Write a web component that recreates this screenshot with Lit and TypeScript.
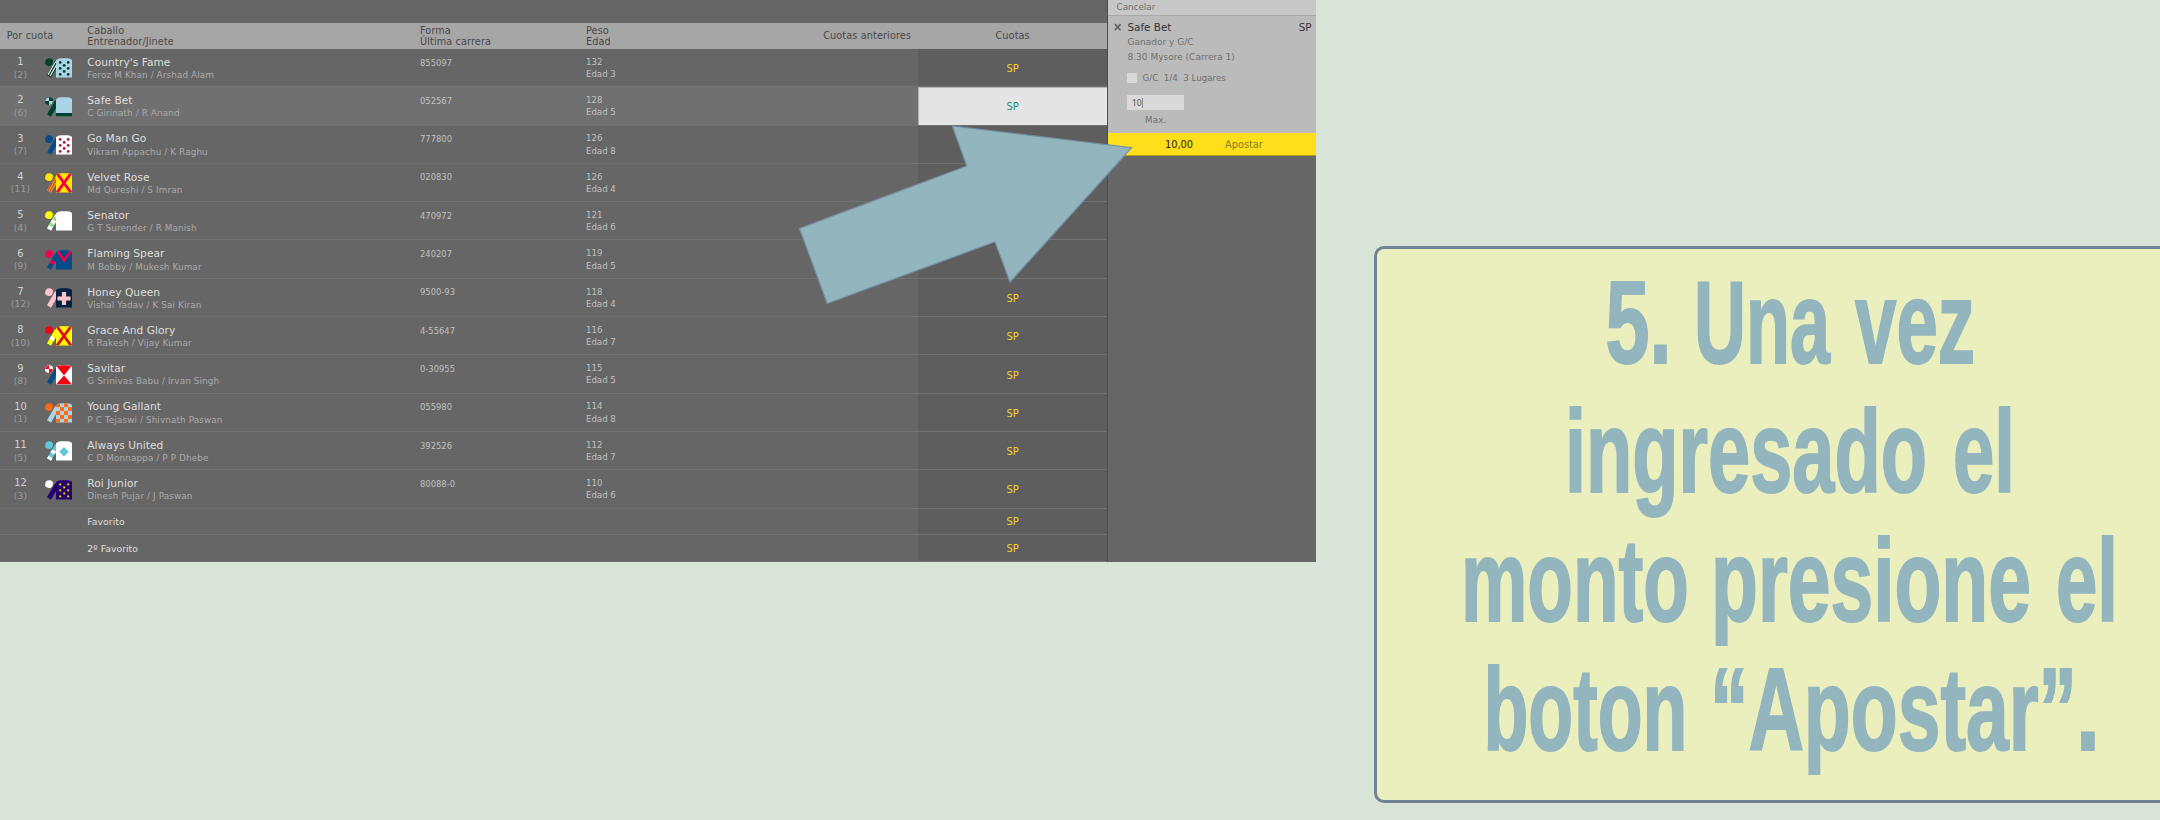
import { LitElement, html, css, svg, nothing, type SVGTemplateResult } from "lit";
import { customElement, property } from "lit/decorators.js";
import { classMap } from "lit/directives/class-map.js";

interface Runner {
  n: number;
  draw: number;
  name: string;
  team: string;
  form: string;
  weight: number;
  age: number;
}

const RUNNERS: Runner[] = [
  { n: 1, draw: 2, name: "Country's Fame", team: "Feroz M Khan / Arshad Alam", form: "855097", weight: 132, age: 3 },
  { n: 2, draw: 6, name: "Safe Bet", team: "C Girinath / R Anand", form: "052567", weight: 128, age: 5 },
  { n: 3, draw: 7, name: "Go Man Go", team: "Vikram Appachu / K Raghu", form: "777800", weight: 126, age: 8 },
  { n: 4, draw: 11, name: "Velvet Rose", team: "Md Qureshi / S Imran", form: "020830", weight: 126, age: 4 },
  { n: 5, draw: 4, name: "Senator", team: "G T Surender / R Manish", form: "470972", weight: 121, age: 6 },
  { n: 6, draw: 9, name: "Flaming Spear", team: "M Bobby / Mukesh Kumar", form: "240207", weight: 119, age: 5 },
  { n: 7, draw: 12, name: "Honey Queen", team: "Vishal Yadav / K Sai Kiran", form: "9500-93", weight: 118, age: 4 },
  { n: 8, draw: 10, name: "Grace And Glory", team: "R Rakesh / Vijay Kumar", form: "4-55647", weight: 116, age: 7 },
  { n: 9, draw: 8, name: "Savitar", team: "G Srinivas Babu / Irvan Singh", form: "0-30955", weight: 115, age: 5 },
  { n: 10, draw: 1, name: "Young Gallant", team: "P C Tejaswi / Shivnath Paswan", form: "055980", weight: 114, age: 8 },
  { n: 11, draw: 5, name: "Always United", team: "C D Monnappa / P P Dhebe", form: "392526", weight: 112, age: 7 },
  { n: 12, draw: 3, name: "Roi Junior", team: "Dinesh Pujar / J Paswan", form: "80088-0", weight: 110, age: 6 },
];

const BODY = "M11 2.2 Q13 .3 16 .2 H22.5 Q25.5 .4 27 2 V19.5 H11 Z";
const SLEEVE = "M11 3.2 L10 3.4 L2 17.3 L6 19.8 L11 11 Z";
const CAP = "M.3 4.6 A3.7 3.7 0 0 1 4 .3 Q7 0 8 2.6 Q8.2 6 6.2 7.4 Q4 8.6 2 7.6 L0 6 Z";

const dots = (color: string, r = 1.4): SVGTemplateResult[] =>
  [[15, 4], [23, 4], [19, 7], [15, 10], [23, 10], [19, 13], [15, 16], [23, 16]].map(
    ([x, y]) => svg`<circle cx=${x + 0.2} cy=${y + 0.4} r=${r} fill=${color} />`,
  );

const checks = (): SVGTemplateResult[] => {
  const out: SVGTemplateResult[] = [];
  for (let r = 0; r < 5; r++) {
    for (let c = 0; c < 4; c++) {
      if ((r + c) % 2 === 0) out.push(svg`<rect x=${11 + c * 4} y=${r * 4} width="4" height="4" fill="#ff6a13" />`);
    }
  }
  return out;
};

// Sleeve bands run across the arm, centred at the given heights.
const bands = (color: string, at: number[]): SVGTemplateResult[] =>
  at.map((y) => {
    const x = 4 + (18.5 - y) * 0.58;
    return svg`<path d="M${x - 4} ${y - 2.3} L${x + 4} ${y + 2.3}" stroke=${color} stroke-width="3.4" />`;
  });

interface Silk {
  cap: string;
  sleeve: string;
  body: string;
  bodyMark?: SVGTemplateResult | SVGTemplateResult[];
  sleeveMark?: SVGTemplateResult | SVGTemplateResult[];
  capMark?: SVGTemplateResult;
}

const quarterCap = (color: string) => svg`<path d="M4 .2 L4 4 L0 4 Q.4 .8 4 .2 Z M4 4 H8 Q8 8 4 8 Z" fill=${color} />`;
const cross = (color: string) => svg`<path d="M12.5 1 L26 19.5 M25.5 1 L12 19.5" stroke=${color} stroke-width="2.9" />`;

const SILKS: Record<number, Silk> = {
  1: { cap: "#02412c", sleeve: "#02412c", body: "#abd5e6", bodyMark: dots("#02412c"),
    sleeveMark: svg`<path d="M10.6 3.6 L3 16.8 M11.4 7 L5 18.2" stroke="#fff" stroke-width="1.1" />` },
  2: { cap: "#02412c", sleeve: "#02412c", body: "#abd5e6", capMark: quarterCap("#abd5e6"),
    bodyMark: svg`<rect x="11" y="16" width="16" height="4" fill="#02412c" />` },
  3: { cap: "#044c87", sleeve: "#044c87", body: "#fff", bodyMark: dots("#b3133f") },
  4: { cap: "#ffe600", sleeve: "#ff9c1a", body: "#ffe600", bodyMark: cross("#f5004f"),
    sleeveMark: svg`<path d="M10 4.5 L2.8 17.6 M11 7 L5 18.6" stroke="#b04a2a" stroke-width="1.1" />` },
  5: { cap: "#ffff00", sleeve: "#fff", body: "#fff", sleeveMark: bands("#8fe28f", [8, 14]) },
  6: { cap: "#f5004f", sleeve: "#044c87", body: "#044c87", sleeveMark: bands("#f5004f", [12.5]),
    bodyMark: svg`<path d="M13 1.5 L19 10.5 L25.5 1.5" fill="none" stroke="#f5004f" stroke-width="2.6" />` },
  7: { cap: "#fdc4cb", sleeve: "#fdc4cb", body: "#02233f",
    bodyMark: svg`<path d="M19 4 V17 M12.5 10.5 H25.5" stroke="#fdc4cb" stroke-width="4.2" />` },
  8: { cap: "#f5000f", sleeve: "#ffff00", body: "#ffff00", bodyMark: cross("#e0101a"), sleeveMark: bands("#fff", [12.5]) },
  9: { cap: "#fff", sleeve: "#044c87", body: "#fff", capMark: quarterCap("#f5000f"),
    bodyMark: svg`<path d="M11.5 1 L19 10.5 L26.5 1 Q19 -1 11.5 1 Z M11 19.5 L19 10.5 L27 19.5 Z" fill="#f5000f" />` },
  10: { cap: "#ff6a13", sleeve: "#abd5e6", body: "#abd5e6", bodyMark: checks() },
  11: { cap: "#5fc7d9", sleeve: "#5fc7d9", body: "#fff", sleeveMark: bands("#fff", [11, 17.5]),
    bodyMark: svg`<path d="M19 6 L23.7 10.7 L19 15.4 L14.3 10.7 Z" fill="#5fc7d9" />` },
  12: { cap: "#fff", sleeve: "#26006f", body: "#26006f", bodyMark: dots("#e0d800", 1.1) },
};

@customElement("jockey-silk")
class JockeySilk extends LitElement {
  @property({ type: Number }) runner = 1;

  static styles = css`
    :host { display: block; width: 27px; height: 20px; }
    svg { display: block; }
  `;

  render() {
    const s = SILKS[this.runner];
    return html`<svg width="27" height="20" viewBox="0 0 27 20">
      <defs>
        <clipPath id="b"><path d=${BODY} /></clipPath>
        <clipPath id="s"><path d=${SLEEVE} /></clipPath>
        <clipPath id="c"><path d=${CAP} /></clipPath>
      </defs>
      <path d=${SLEEVE} fill=${s.sleeve} />
      <g clip-path="url(#s)">${s.sleeveMark ?? nothing}</g>
      <path d=${BODY} fill=${s.body} />
      <g clip-path="url(#b)">${s.bodyMark ?? nothing}</g>
      <path d=${CAP} fill=${s.cap} />
      <g clip-path="url(#c)">${s.capMark ?? nothing}</g>
    </svg>`;
  }
}

@customElement("race-card")
class RaceCard extends LitElement {
  static styles = css`
    :host { display: block; width: 1107px; height: 562px; background: #666; color: #c0c0c0; overflow: hidden; }
    .head, .row { display: grid; grid-template-columns: 41px 46.3px 332.7px 166px 230px 102.3px 188.7px; }
    .head { height: 26px; margin-top: 23px; padding-top: 1px; box-sizing: border-box; background: #a6a6a6; color: #484848; font-size: 9.7px; letter-spacing: 0.12px; line-height: 10.8px; align-items: center; grid-template-columns: 87.3px 332.7px 166px 230px 102.3px 188.7px; }
    .head .first { padding-left: 6.7px; }
    .center { text-align: center; }
    .row { height: 38.3px; box-sizing: border-box; border-bottom: 1px solid #727272; }
    .row.selected { background: #707070; }
    .num { text-align: center; padding-top: 7.2px; line-height: 12.4px; font-size: 9.9px; color: #d2d2d2; }
    .draw { font-size: 8.9px; letter-spacing: 0.3px; color: #9c9c9c; }
    .silk { padding: 9.3px 0 0 4px; }
    .name { padding-top: 7.8px; font-size: 10.65px; line-height: 12.3px; letter-spacing: 0.03px; color: #dedede; }
    .team { font-size: 8.85px; letter-spacing: 0.1px; color: #aaa; }
    .form { padding-top: 7.6px; font-size: 8.4px; line-height: 12px; }
    .weight { padding-top: 6.8px; font-size: 8.6px; line-height: 12.3px; }
    .odds { display: flex; align-items: center; justify-content: center; padding-top: 2px; background: #5e5e5e; color: #f2d428; font-size: 9.9px; }
    .selected .odds { background: #e4e4e4; color: #2d8a76; box-shadow: inset 1px 1px 0 #b0b0b0; }
    .short { height: 26.7px; }
    .short .name { padding-top: 7.4px; font-size: 9.3px; grid-column: 3 / 7; }
    .short .odds { grid-column: 7; padding-top: 0.6px; }
  `;

  render() {
    return html`
      <div class="head">
        <div class="first">Por cuota</div>
        <div>Caballo<br />Entrenador/Jinete</div>
        <div>Forma<br />Última carrera</div>
        <div>Peso<br />Edad</div>
        <div class="center">Cuotas anteriores</div>
        <div class="center">Cuotas</div>
      </div>
      ${RUNNERS.map(
        (r) => html`<div class=${classMap({ row: true, selected: r.n === 2 })}>
          <div class="num">${r.n}<div class="draw">(${r.draw})</div></div>
          <div class="silk"><jockey-silk .runner=${r.n}></jockey-silk></div>
          <div class="name">${r.name}<div class="team">${r.team}</div></div>
          <div class="form">${r.form}</div>
          <div class="weight">${r.weight}<br />Edad ${r.age}</div>
          <div></div>
          <div class="odds">SP</div>
        </div>`,
      )}
      ${["Favorito", "2º Favorito"].map(
        (t) => html`<div class="row short"><div class="name">${t}</div><div class="odds">SP</div></div>`,
      )}
    `;
  }
}

@customElement("bet-slip")
class BetSlip extends LitElement {
  static styles = css`
    :host { display: block; width: 208px; height: 562px; background: #666; border-left: 1px solid #4c4c4c; box-sizing: content-box; color: #707070; font-size: 9px; }
    .cancel { height: 15px; line-height: 15.6px; background: #c7c7c7; border-bottom: 1px solid #a9a9a9; padding-left: 8.5px; font-size: 8.8px; }
    .slip { height: 116.5px; box-sizing: border-box; background: #bbb; padding: 4px 4.5px 0 6px; display: flex; flex-direction: column; }
    .title { display: grid; grid-template-columns: 13.5px 1fr auto; align-items: center; height: 14.8px; font-size: 10.4px; color: #333; }
    .indent { padding-left: 13.5px; line-height: 15.5px; }
    .each { display: flex; align-items: center; height: 10px; margin: 7.2px 0 12px 13px; font-size: 8.7px; white-space: pre; }
    .box { width: 10px; height: 10px; background: #d9d9d9; margin-right: 5.5px; }
    .stake { width: 57px; height: 15.5px; box-sizing: border-box; margin-left: 13px; padding-left: 5px; background: #d9d9d9; color: #555; font: 8.5px/16px "Noto Sans", sans-serif; display: flex; align-items: center; }
    .caret { width: 1px; height: 10px; background: #888; }
    .max { padding-left: 31px; line-height: 20.6px; font-size: 8.7px; letter-spacing: 0.2px; }
    .place { height: 23px; box-sizing: border-box; background: #ffdf1b; border-bottom: 1px solid #b39d17; line-height: 23px; font-size: 9.8px; padding-left: 57px; display: grid; grid-template-columns: 60px 1fr; color: #8b7d24; }
    .amount { color: #1e1a00; }
  `;

  render() {
    return html`
      <div class="cancel">Cancelar</div>
      <div class="slip">
        <div class="title">
          <svg width="8" height="8" viewBox="0 0 8 8"><path d="M0.8 1 L6.6 7.2 M6.6 1 L0.8 7.2" stroke="#5c5c5c" stroke-width="1.6" /></svg>
          <span>Safe Bet</span><span>SP</span>
        </div>
        <div class="indent">Ganador y G/C</div>
        <div class="indent">8.30 Mysore (Carrera 1)</div>
        <div class="each"><span class="box"></span>G/C  1/4  3 Lugares</div>
        <div class="stake">10<span class="caret"></span></div>
        <div class="max">Max.</div>
      </div>
      <div class="place"><span class="amount">10,00</span><span>Apostar</span></div>
    `;
  }
}

interface Word {
  t: string;
  x: number;
  s: number;
}

// Lines of the instruction card; x is each word's start inside the card and s its condensing factor.
const LINES: Word[][] = [
  [{ t: "5.", x: 228.5, s: 0.671 }, { t: "Una", x: 317, s: 0.61 }, { t: "vez", x: 478, s: 0.631 }],
  [{ t: "ingresado", x: 188, s: 0.642 }, { t: "el", x: 576, s: 0.63 }],
  [{ t: "monto", x: 84, s: 0.6325 }, { t: "presione", x: 334, s: 0.6507 }, { t: "el", x: 679, s: 0.63 }],
  [{ t: "boton", x: 106.5, s: 0.6225 }, { t: "“Apostar”", x: 333, s: 0.651 }, { t: ".", x: 699, s: 0.73 }],
];

@customElement("step-card")
class StepCard extends LitElement {
  static styles = css`
    :host { display: block; width: 850px; height: 557px; box-sizing: border-box; background: #ebefbe; border: 3px solid #708294; border-radius: 10px; }
    svg { display: block; }
    text { font: 700 117px "Liberation Sans", sans-serif; font-kerning: none; fill: #92b5be; stroke: #92b5be; stroke-width: 2px; }
  `;

  render() {
    return html`<svg width="783" height="551" viewBox="0 0 783 551">
      ${LINES.map((line, i) =>
        line.map(
          (w) => svg`<text transform="translate(${w.x} ${113.5 + i * 129}) scale(${w.s * 1.0085} 1)">${w.t}</text>`,
        ),
      )}
    </svg>`;
  }
}

@customElement("app-root")
class AppRoot extends LitElement {
  static styles = css`
    :host { display: block; width: 100%; height: 820px; overflow: hidden; background: #d9e4d8; position: relative; font-family: "DejaVu Sans", Verdana, sans-serif; }
    .stage { display: flex; align-items: flex-start; width: 2300px; }
    .card { margin: 246px 0 0 58px; flex: none; }
    .arrow { position: absolute; left: 790px; top: 115px; }
  `;

  render() {
    return html`
      <div class="stage">
        <race-card></race-card>
        <bet-slip></bet-slip>
        <step-card class="card"></step-card>
      </div>
      <svg class="arrow" width="350" height="200" viewBox="790 115 350 200">
        <path d="M952.3 126 L1131.6 147.7 L1010 282 L995 241.8 L827.2 303.5 L799.5 228.4 L966.8 166 Z" fill="#92b5be" stroke="#7491a3" stroke-width="1.2" />
      </svg>
    `;
  }
}
